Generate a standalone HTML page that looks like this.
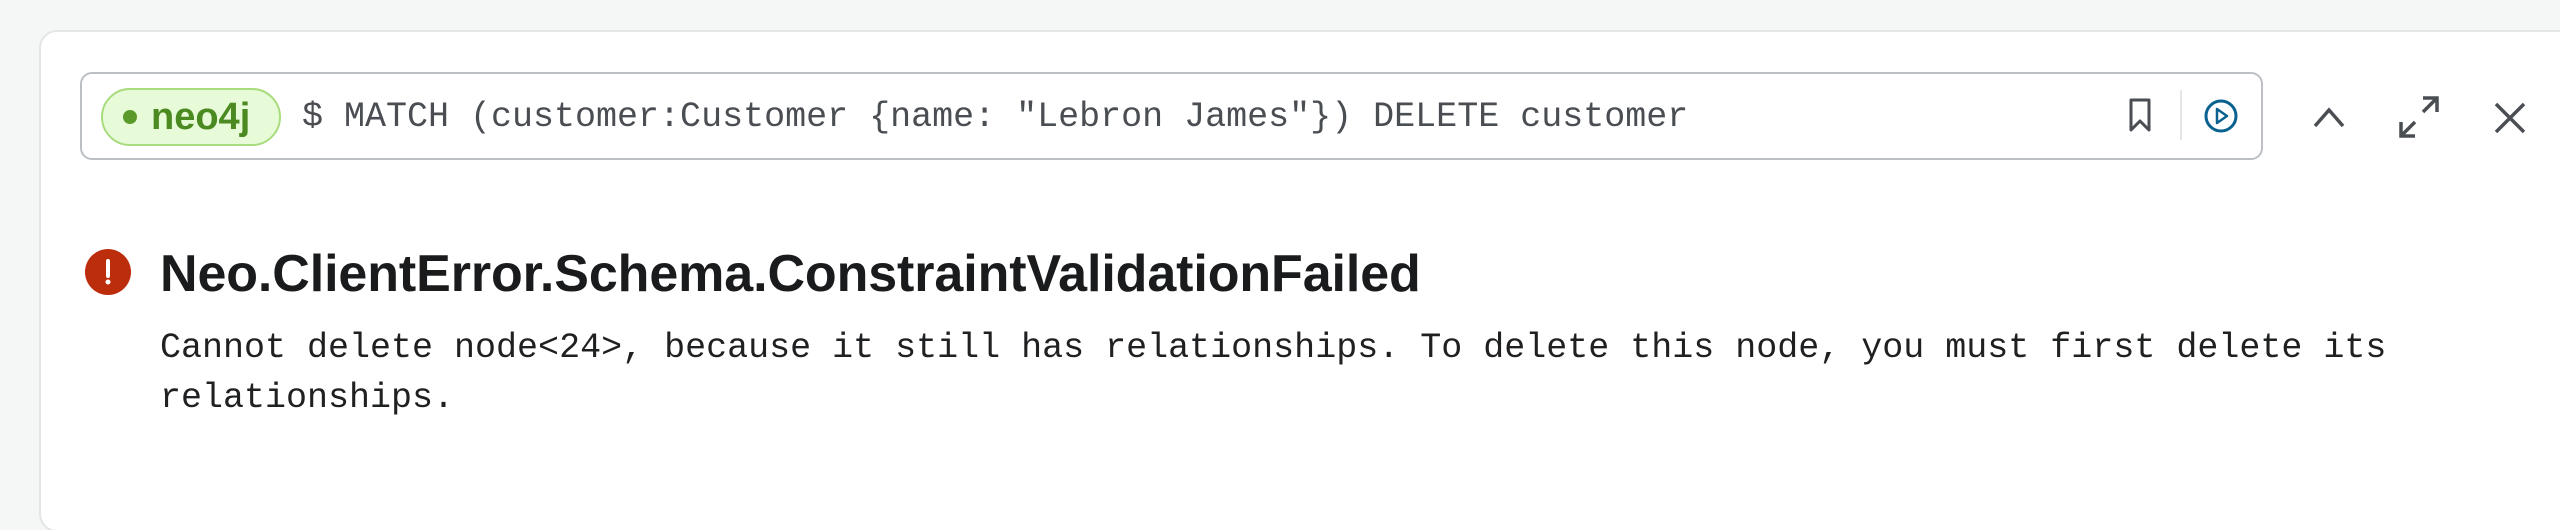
<!DOCTYPE html>
<html><head><meta charset="utf-8"><style>
html,body{margin:0;padding:0;width:2560px;height:530px;background:#f5f6f6;overflow:hidden;font-family:"Liberation Sans",sans-serif;position:relative}
.card{position:absolute;left:39px;top:30px;width:2540px;height:502px;background:#fff;border:2px solid #e3e5e6;border-radius:18px;box-sizing:border-box}
.input{position:absolute;left:80px;top:72px;width:2183px;height:88px;border:2px solid #bcc0c4;border-radius:12px;box-sizing:border-box;background:#fff}
.pill{position:absolute;left:101px;top:88px;width:180px;height:58px;border:2px solid #a8dc7e;background:#e8fbd8;border-radius:29px;box-sizing:border-box}
.dot{position:absolute;left:123px;top:110px;width:14px;height:14px;border-radius:50%;background:#5a9a2a}
.neo{position:absolute;left:151px;top:92px;font:bold 38px "Liberation Sans",sans-serif;color:#4b8a21;line-height:50px}
.q{position:absolute;left:302px;top:95px;font:35px "Liberation Mono",monospace;color:#4a4e53;line-height:44px;white-space:pre}
.h{position:absolute;left:160px;top:244px;font:bold 52px "Liberation Sans",sans-serif;color:#1a1b1d;white-space:pre;letter-spacing:-0.1px;line-height:60px}
.b{position:absolute;left:160px;top:323px;font:35px "Liberation Mono",monospace;color:#1f2022;line-height:50px;white-space:pre}
svg{position:absolute}
</style></head><body>
<div class="card"></div>
<div class="input"></div>
<div class="pill"></div><div class="dot"></div><div class="neo">neo4j</div>
<div class="q">$ MATCH (customer:Customer {name: "Lebron James"}) DELETE customer</div>
<svg style="left:2124px;top:96px" width="32" height="40" viewBox="0 0 32 40"><path d="M7 4h18v30l-9-9-9 9z" fill="none" stroke="#4a4e53" stroke-width="3" stroke-linejoin="round"/></svg>
<div style="position:absolute;left:2180px;top:90px;width:2px;height:50px;background:#e3e5e6"></div>
<svg style="left:2203px;top:98px" width="36" height="36" viewBox="0 0 36 36"><circle cx="18" cy="18" r="15" fill="none" stroke="#0a6190" stroke-width="3"/><path d="M14 11v14l10-7z" fill="none" stroke="#0a6190" stroke-width="2.5" stroke-linejoin="round"/></svg>
<svg style="left:2309px;top:98px" width="40" height="40" viewBox="0 0 40 40"><path d="M6 28L20 12l14 16" fill="none" stroke="#4a4e53" stroke-width="3.5"/></svg>
<svg style="left:2396px;top:94px" width="46" height="46" viewBox="0 0 46 46"><path d="M27 4h14v14M41 4L27 18M19 42H5V28M5 42l14-14" fill="none" stroke="#4a4e53" stroke-width="3.5"/></svg>
<svg style="left:2492px;top:100px" width="36" height="36" viewBox="0 0 36 36"><path d="M4 4l28 28M32 4L4 32" fill="none" stroke="#4a4e53" stroke-width="3.5"/></svg>
<svg style="left:85px;top:249px" width="46" height="46" viewBox="0 0 46 46"><circle cx="23" cy="23" r="23" fill="#bb2d0b"/><path d="M23 12v15" stroke="#fff" stroke-width="4" stroke-linecap="round"/><circle cx="23" cy="33" r="2.5" fill="#fff"/></svg>
<div class="h">Neo.ClientError.Schema.ConstraintValidationFailed</div>
<div class="b">Cannot delete node&lt;24&gt;, because it still has relationships. To delete this node, you must first delete its
relationships.</div>
</body></html>
